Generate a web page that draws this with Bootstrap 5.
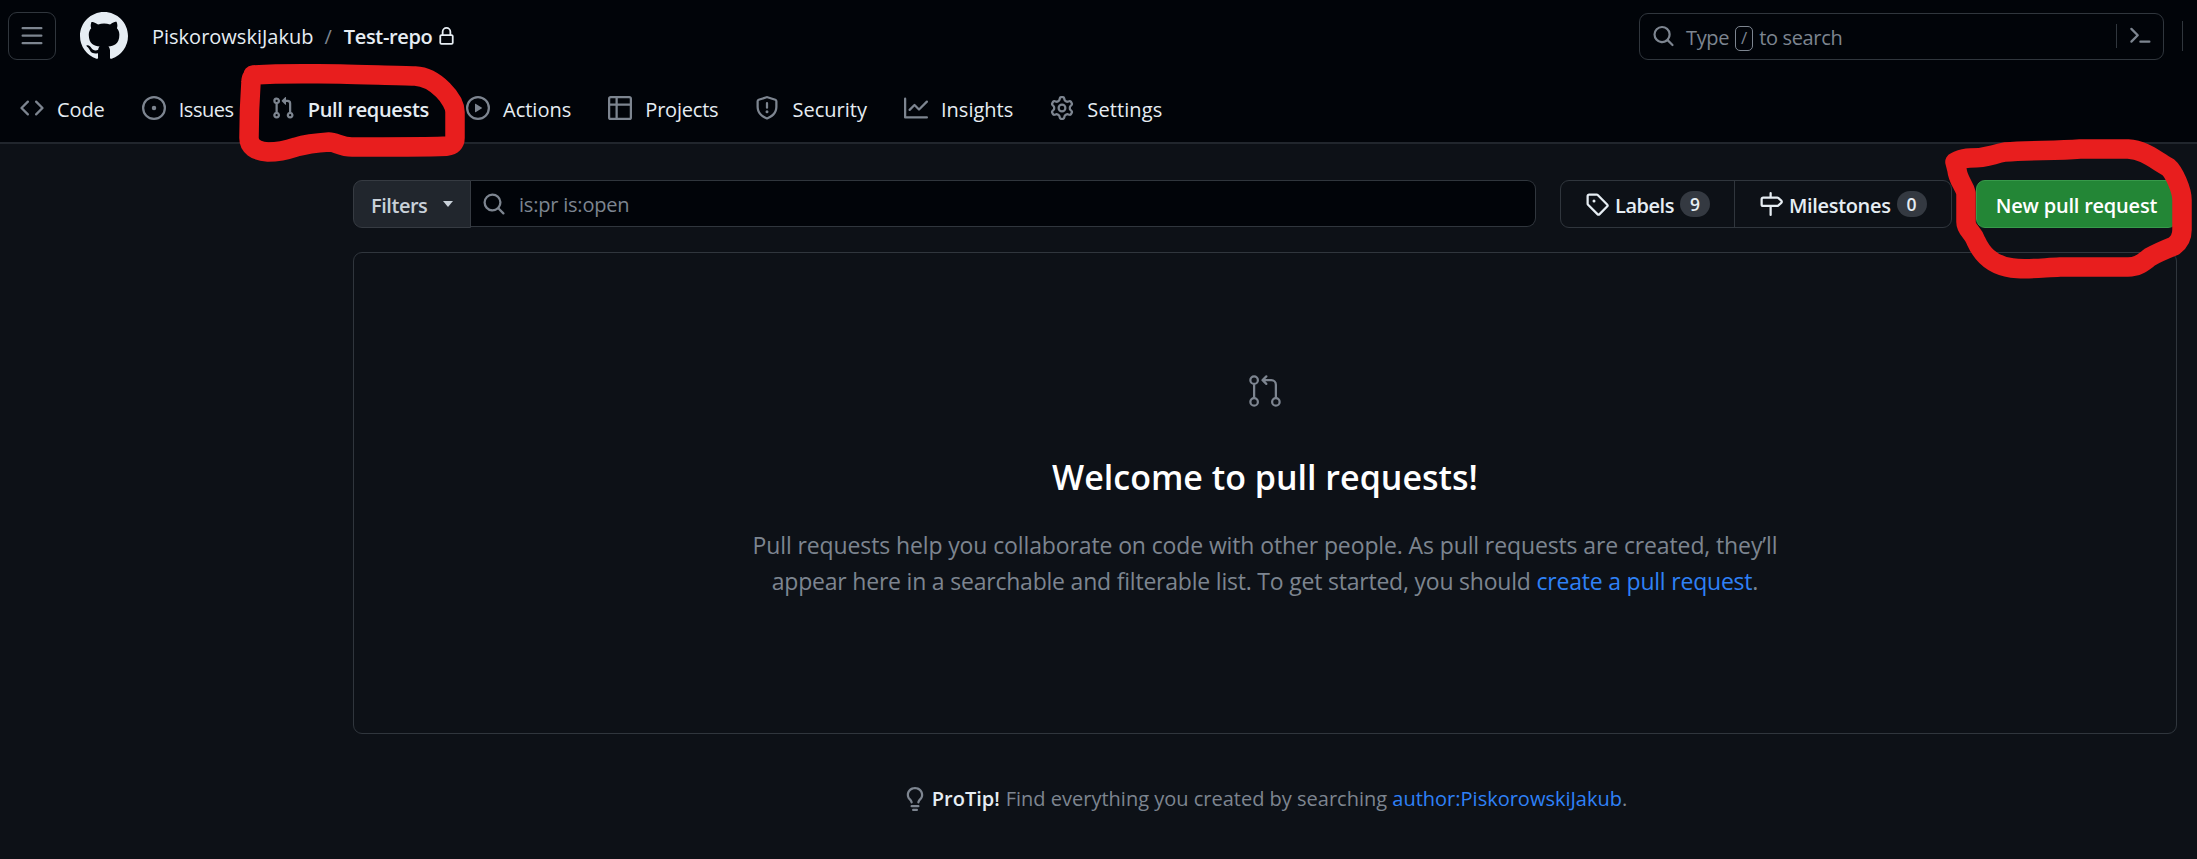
<!DOCTYPE html>
<html lang="en" data-bs-theme="dark">
<head>
<meta charset="utf-8">
<title>Pull requests</title>
<link href="https://cdn.jsdelivr.net/npm/bootstrap@5.3.0/dist/css/bootstrap.min.css" rel="stylesheet">
<script src="https://cdn.jsdelivr.net/npm/bootstrap@5.3.0/dist/js/bootstrap.bundle.min.js" defer></script>
<style>
  body { background:#0d1117; color:#e6edf3; font-family:"Open Sans","Noto Sans",sans-serif; font-size:20px; line-height:30px; overflow:hidden; height:859px; width:2197px; white-space:nowrap; }
  svg { fill:currentColor; flex:none; display:block; }
  a, a:hover { color:#2f81f7; text-decoration:none; }
  .w6 { font-weight:600; }
  .muted { color:#7d8590; }
  .txt { padding-top:3px; }
  .crumb, .tip .txt { padding-top:1px; }
  .s0 { letter-spacing:.1px; }
  .s1 { letter-spacing:-.12px; }
  .s2 { letter-spacing:-.21px; }
  .s3 { letter-spacing:-.34px; }
  .s4 { letter-spacing:-.46px; }
  .site-head { background:#010409; height:144px; border-bottom:2px solid #21262d; }
  .top-row { height:72px; padding-left:8px; padding-right:14px; }
  .menu-btn { width:48px; height:48px; border:1px solid #30363d; border-radius:9px; color:#7d8590; }
  .search-box { width:525px; height:47px; border:1px solid #30363d; border-radius:9px; color:#7d8590; padding-left:12px; padding-right:11px; }
  .slash { width:18px; height:25px; margin-top:4px; border:1px solid #7d8590; border-radius:5px; font-size:17px; line-height:22px; text-align:center; }
  .rule { width:1px; background:#30363d; }
  .tabs-row { height:72px; padding-left:20px; gap:37.1px; }
  .tab { gap:13px; color:#e6edf3; }
  .tab svg { color:#7d8590; }
  .page { padding:36px 20px 0 353px; }
  .filter-btn { width:118px; height:48px; background:#21262d; border:1px solid #363b42; border-radius:9px 0 0 9px; color:#c9d1d9; padding:0 17px; }
  .caret { border:5.5px solid transparent; border-top:6px solid #c9d1d9; border-bottom:0; }
  .query { height:47px; background:#010409; border:1px solid #30363d; border-left:0; border-radius:0 9px 9px 0; padding-left:11px; }
  .pair { width:392px; height:48px; border:1px solid #30363d; border-radius:9px; margin-left:24px; margin-right:24px; }
  .pair > div { padding-left:24px; }
  .pair > div:first-child { width:174px; border-right:1px solid #30363d; }
  .count { width:30px; height:26px; border-radius:13px; background:#343941; font-size:17.5px; line-height:26px; text-align:center; }
  .new-btn { width:201px; height:48px; background:#238636; border:1px solid #379a4a; border-radius:9px; color:#fff; }
  .blank { height:482px; margin-top:24px; border:1px solid #30363d; border-radius:9px; padding-top:120px; }
  .blank h2 { font-size:34px; font-weight:600; line-height:54px; margin:41px 0 0; }
  .blank p { font-size:23px; line-height:36px; margin:23px 0 0; }
  .tip { margin-top:49px; }
  .ink { position:absolute; left:0; top:0; pointer-events:none; fill:none; }
</style>
</head>
<body>
<header class="site-head">
  <div class="top-row d-flex align-items-center">
    <div class="menu-btn d-flex align-items-center justify-content-center"><svg width="24" height="24" viewBox="0 0 16 16"><path d="M1 2.75A.75.75 0 0 1 1.75 2h12.5a.75.75 0 0 1 0 1.5H1.750A.75.75 0 0 1 1 2.75Zm0 5A.75.75 0 0 1 1.75 7h12.500a.75.75 0 0 1 0 1.500H1.750A.75.75 0 0 1 1 7.750ZM1.750 12h12.500a.75.75 0 0 1 0 1.500H1.750a.75.75 0 0 1 0-1.500Z"/></svg></div>
    <svg class="ms-4" width="48" height="48" viewBox="0 0 16 16"><path d="M8 0c4.420 0 8 3.580 8 8a8.013 8.013 0 0 1-5.450 7.590c-.4.080-.55-.17-.55-.38 0-.27.010-1.130.010-2.200 0-.75-.25-1.230-.54-1.480 1.780-.2 3.650-.88 3.650-3.950 0-.88-.31-1.590-.82-2.150.080-.2.360-1.020-.080-2.120 0 0-.67-.22-2.200.82-.64-.18-1.320-.27-2-.27-.68 0-1.360.090-2 .27-1.530-1.030-2.200-.82-2.200-.82-.44 1.100-.16 1.920-.080 2.120-.51.560-.82 1.280-.82 2.150 0 3.060 1.860 3.750 3.640 3.950-.23.2-.44.550-.51 1.070-.46.210-1.610.550-2.330-.66-.15-.24-.6-.83-1.230-.82-.67.010-.27.380.010.530.34.190.730.900.820 1.130.160.450.680 1.310 2.690.940 0 .670.010 1.300.010 1.490 0 .210-.150.450-.550.380A7.995 7.995 0 0 1 0 8c0-4.420 3.580-8 8-8Z"/></svg>
    <span class="crumb" style="margin-left:24px">PiskorowskiJakub</span>
    <span class="crumb muted" style="margin:0 12px 0 11px">/</span>
    <span class="crumb w6 s3">Test-repo</span>
    <svg style="margin-left:5px" width="19" height="19" viewBox="0 0 16 16"><path d="M4 4a4 4 0 0 1 8 0v2h.250c.966 0 1.750.784 1.750 1.750v5.500A1.750 1.750 0 0 1 12.250 15h-8.500A1.750 1.750 0 0 1 2 13.250v-5.500C2 6.784 2.784 6 3.750 6H4Zm8.250 3.500h-8.500a.25.25 0 0 0-.250.250v5.500c0 .138.112.250.250.250h8.500a.25.25 0 0 0 .250-.250v-5.500a.25.25 0 0 0-.250-.250ZM10.500 6V4a2.500 2.500 0 1 0-5 0v2Z"/></svg>
    <div class="search-box d-flex align-items-center ms-auto">
      <svg width="23" height="24" viewBox="0 0 16 16"><path d="M10.680 11.740a6 6 0 0 1-7.922-8.982 6 6 0 0 1 8.982 7.922l3.040 3.040a.749.749 0 1 1-1.060 1.060ZM11.500 7a4.499 4.499 0 1 0-8.997 0A4.499 4.499 0 0 0 11.500 7Z"/></svg>
      <span class="txt s3" style="margin:0 6px 0 11px">Type</span><span class="slash">/</span><span class="txt s3" style="margin-left:6px">to search</span>
      <span class="rule ms-auto" style="height:24px;margin-right:11px"></span>
      <svg width="24" height="24" viewBox="0 0 16 16"><path d="M1.720 2.720a.75.75 0 0 1 1.060 0l4.250 4.250a.75.75 0 0 1 0 1.060l-4.250 4.250a.75.75 0 0 1-1.060-1.060L5.440 7.500 1.720 3.780a.75.75 0 0 1 0-1.060ZM8.250 11h6a.75.75 0 0 1 0 1.500h-6a.75.75 0 0 1 0-1.500Z"/></svg>
    </div>
    <span class="rule" style="height:30px;margin-left:18px"></span>
  </div>
  <nav class="tabs-row d-flex align-items-center">
    <span class="tab d-flex align-items-center"><svg width="24" height="24" viewBox="0 0 16 16"><path d="m11.280 3.220 4.250 4.250a.75.75 0 0 1 0 1.060l-4.250 4.250a.75.75 0 0 1-1.060-1.060L13.940 8l-3.720-3.720a.75.75 0 0 1 1.060-1.060Zm-6.560 0a.75.75 0 0 1 1.060 1.060L2.060 8l3.720 3.720a.75.75 0 0 1-1.060 1.060L.47 8.530a.75.75 0 0 1 0-1.060Z"/></svg><span class="txt s1">Code</span></span>
    <span class="tab d-flex align-items-center"><svg width="24" height="24" viewBox="0 0 16 16"><circle cx="8" cy="8" r="1.500"/><circle cx="8" cy="8" r="7.250" fill="none" stroke="currentColor" stroke-width="1.500"/></svg><span class="txt s4">Issues</span></span>
    <span class="tab d-flex align-items-center"><svg width="24" height="24" viewBox="0 0 16 16"><path d="M1.500 3.250a2.250 2.250 0 1 1 3 2.122v5.256a2.251 2.251 0 1 1-1.500 0V5.372A2.250 2.250 0 0 1 1.500 3.250Zm5.677-.177L9.573.677A.25.25 0 0 1 10 .854V2.500h1A2.500 2.500 0 0 1 13.500 5v5.628a2.251 2.251 0 1 1-1.500 0V5a1 1 0 0 0-1-1h-1v1.646a.25.25 0 0 1-.427.177L7.177 3.427a.25.25 0 0 1 0-.354ZM3.750 2.500a.75.75 0 1 0 0 1.500.75.75 0 0 0 0-1.500Zm0 9.500a.75.75 0 1 0 0 1.500.75.75 0 0 0 0-1.500Zm8.250.75a.75.75 0 1 0 1.500 0 .75.75 0 0 0-1.500 0Z"/></svg><span class="txt w6 s3">Pull requests</span></span>
    <span class="tab d-flex align-items-center"><svg width="24" height="24" viewBox="0 0 16 16"><circle cx="8" cy="8" r="7.250" fill="none" stroke="currentColor" stroke-width="1.500"/><path d="M6.379 5.227 10.640 7.785a.25.25 0 0 1 0 .430L6.379 10.773A.25.25 0 0 1 6 10.559V5.442a.25.25 0 0 1 .379-.215Z"/></svg><span class="txt">Actions</span></span>
    <span class="tab d-flex align-items-center"><svg width="24" height="24" viewBox="0 0 16 16"><path d="M0 1.750C0 .784.784 0 1.750 0h12.500C15.216 0 16 .784 16 1.750v12.500A1.750 1.750 0 0 1 14.250 16H1.750A1.750 1.750 0 0 1 0 14.250ZM6.500 6.500v8h7.750a.25.25 0 0 0 .250-.250V6.500Zm8-1.500V1.750a.25.25 0 0 0-.250-.250H6.500V5Zm-13 1.500v7.750c0 .138.112.250.250.250H5v-8ZM5 5V1.500H1.750a.25.25 0 0 0-.250.250V5Z"/></svg><span class="txt s2">Projects</span></span>
    <span class="tab d-flex align-items-center"><svg width="24" height="24" viewBox="0 0 16 16"><path d="M7.467.133a1.748 1.748 0 0 1 1.066 0l5.250 1.680A1.750 1.750 0 0 1 15 3.480V7c0 1.566-.320 3.182-1.303 4.682-.983 1.498-2.585 2.813-5.032 3.855a1.697 1.697 0 0 1-1.330 0c-2.447-1.042-4.049-2.357-5.032-3.855C1.320 10.182 1 8.566 1 7V3.480a1.755 1.755 0 0 1 1.217-1.667Zm.610 1.429a.25.25 0 0 0-.153 0l-5.250 1.680a.25.25 0 0 0-.174.238V7c0 1.358.275 2.666 1.057 3.860.784 1.194 2.121 2.340 4.366 3.297a.196.196 0 0 0 .154 0c2.245-.956 3.582-2.104 4.366-3.298C13.225 9.666 13.500 8.360 13.500 7V3.480a.251.251 0 0 0-.174-.237l-5.250-1.680ZM8.750 4.750v3a.75.75 0 0 1-1.500 0v-3a.75.75 0 0 1 1.500 0ZM9 10.500a1 1 0 1 1-2 0 1 1 0 0 1 2 0Z"/></svg><span class="txt">Security</span></span>
    <span class="tab d-flex align-items-center"><svg width="24" height="24" viewBox="0 0 16 16"><path d="M1.500 1.750V13.500h13.750a.75.75 0 0 1 0 1.500H.750a.75.75 0 0 1-.750-.750V1.750a.75.75 0 0 1 1.500 0Zm14.280 2.530-5.250 5.250a.75.75 0 0 1-1.060 0L7 7.060 4.280 9.780a.75.75 0 0 1-1.060-1.060l3.250-3.250a.75.75 0 0 1 1.060 0L10 7.940l4.720-4.720a.75.75 0 0 1 1.060 1.060Z"/></svg><span class="txt">Insights</span></span>
    <span class="tab d-flex align-items-center"><svg width="24" height="24" viewBox="0 0 16 16"><path d="M8 0a8.200 8.200 0 0 1 .701.031C9.444.095 9.990.645 10.160 1.290l.288 1.107c.018.066.079.158.212.224.231.114.454.243.668.386.123.082.233.090.299.071l1.103-.303c.644-.176 1.392.021 1.820.630.270.385.506.792.704 1.218.315.675.111 1.422-.364 1.891l-.814.806c-.049.048-.098.147-.088.294.016.257.016.515 0 .772-.010.147.038.246.088.294l.814.806c.475.469.679 1.216.364 1.891a7.977 7.977 0 0 1-.704 1.217c-.428.610-1.176.807-1.820.630l-1.102-.302c-.067-.019-.177-.011-.300.071a5.909 5.909 0 0 1-.668.386c-.133.066-.194.158-.211.224l-.290 1.106c-.168.646-.715 1.196-1.458 1.260a8.006 8.006 0 0 1-1.402 0c-.743-.064-1.289-.614-1.458-1.260l-.289-1.106c-.018-.066-.079-.158-.212-.224a5.738 5.738 0 0 1-.668-.386c-.123-.082-.233-.090-.299-.071l-1.103.303c-.644.176-1.392-.021-1.820-.630a8.120 8.120 0 0 1-.704-1.218c-.315-.675-.111-1.422.363-1.891l.815-.806c.050-.048.098-.147.088-.294a6.214 6.214 0 0 1 0-.772c.010-.147-.038-.246-.088-.294l-.815-.806C.635 6.045.431 5.298.746 4.623a7.920 7.920 0 0 1 .704-1.217c.428-.610 1.176-.807 1.820-.630l1.102.302c.067.019.177.011.300-.071.214-.143.437-.272.668-.386.133-.066.194-.158.211-.224l.290-1.106C6.009.645 6.556.095 7.299.030 7.530.010 7.764 0 8 0Zm-.571 1.525c-.036.003-.108.036-.137.146l-.289 1.105c-.147.561-.549.967-.998 1.189-.173.086-.340.183-.500.290-.417.278-.970.423-1.529.270l-1.103-.303c-.109-.030-.175.016-.195.045-.220.312-.412.644-.573.990-.014.031-.021.110.059.190l.815.806c.411.406.562.957.530 1.456a4.709 4.709 0 0 0 0 .582c.032.499-.119 1.050-.530 1.456l-.815.806c-.081.080-.073.159-.059.190.162.346.353.677.573.989.020.030.085.076.195.046l1.102-.303c.560-.153 1.113-.008 1.530.270.161.107.328.204.501.290.447.222.850.629.997 1.189l.289 1.105c.029.109.101.143.137.146a6.600 6.600 0 0 0 1.142 0c.036-.003.108-.036.137-.146l.289-1.105c.147-.561.549-.967.998-1.189.173-.086.340-.183.500-.290.417-.278.970-.423 1.529-.270l1.103.303c.109.029.175-.016.195-.045.220-.313.411-.644.573-.990.014-.031.021-.110-.059-.190l-.815-.806c-.411-.406-.562-.957-.530-1.456a4.709 4.709 0 0 0 0-.582c-.032-.499.119-1.050.530-1.456l.815-.806c.081-.080.073-.159.059-.190a6.464 6.464 0 0 0-.573-.989c-.020-.030-.085-.076-.195-.046l-1.102.303c-.560.153-1.113.008-1.530-.270a4.440 4.440 0 0 0-.501-.290c-.447-.222-.850-.629-.997-1.189l-.289-1.105c-.029-.110-.101-.143-.137-.146a6.600 6.600 0 0 0-1.142 0ZM11 8a3 3 0 1 1-6 0 3 3 0 0 1 6 0ZM9.500 8a1.500 1.500 0 1 0-3.001.001A1.500 1.500 0 0 0 9.500 8Z"/></svg><span class="txt s0">Settings</span></span>
  </nav>
</header>
<main class="page">
  <div class="d-flex">
    <div class="filter-btn w6 d-flex align-items-center justify-content-between"><span class="txt s4">Filters</span><i class="caret"></i></div>
    <div class="query d-flex flex-grow-1 align-items-center muted"><svg width="24" height="24" viewBox="0 0 16 16"><path d="M10.680 11.740a6 6 0 0 1-7.922-8.982 6 6 0 0 1 8.982 7.922l3.040 3.040a.749.749 0 1 1-1.060 1.060ZM11.500 7a4.499 4.499 0 1 0-8.997 0A4.499 4.499 0 0 0 11.500 7Z"/></svg><span class="txt s2" style="margin-left:13px">is:pr is:open</span></div>
    <div class="pair d-flex w6">
      <div class="d-flex align-items-center"><svg width="24" height="24" viewBox="0 0 16 16"><path d="M1 7.775V2.750C1 1.784 1.784 1 2.750 1h5.025c.464 0 .910.184 1.238.513l6.250 6.250a1.750 1.750 0 0 1 0 2.474l-5.026 5.026a1.750 1.750 0 0 1-2.474 0l-6.250-6.250A1.752 1.752 0 0 1 1 7.775Zm1.500 0c0 .066.026.130.073.177l6.250 6.250a.25.25 0 0 0 .354 0l5.025-5.025a.25.25 0 0 0 0-.354l-6.250-6.250a.25.25 0 0 0-.177-.073H2.750a.25.25 0 0 0-.250.250ZM6 5a1 1 0 1 1 0 2 1 1 0 0 1 0-2Z"/></svg><span class="txt s4" style="margin:0 6px">Labels</span><span class="count">9</span></div>
      <div class="d-flex align-items-center"><svg width="24" height="24" viewBox="0 0 16 16"><path d="M7.750 0a.75.75 0 0 1 .750.750V3h3.634c.414 0 .814.147 1.130.414l2.070 1.750a1.750 1.750 0 0 1 0 2.672l-2.070 1.750a1.750 1.750 0 0 1-1.130.414H8.500v5.250a.75.75 0 0 1-1.500 0V10H2.750A1.750 1.750 0 0 1 1 8.250v-3.500C1 3.784 1.784 3 2.750 3H7V.750A.75.75 0 0 1 7.750 0Zm4.384 8.500a.25.25 0 0 0 .161-.060l2.070-1.750a.248.248 0 0 0 0-.380l-2.070-1.750a.25.25 0 0 0-.161-.060H2.750a.25.25 0 0 0-.250.250v3.500c0 .138.112.250.250.250h9.384Z"/></svg><span class="txt s3" style="margin:0 6px">Milestones</span><span class="count">0</span></div>
    </div>
    <div class="new-btn w6 d-flex align-items-center justify-content-center"><span class="txt s2">New pull request</span></div>
  </div>
  <section class="blank d-flex flex-column align-items-center text-center">
    <svg class="muted" width="36" height="36" viewBox="0 0 24 24"><path d="M16 19.250a3.250 3.250 0 1 1 6.500 0 3.250 3.250 0 0 1-6.500 0Zm-14.500 0a3.250 3.250 0 1 1 6.500 0 3.250 3.250 0 0 1-6.500 0Zm0-14.500a3.250 3.250 0 1 1 6.500 0 3.250 3.250 0 0 1-6.500 0ZM4.750 3a1.750 1.750 0 1 0 .001 3.501A1.750 1.750 0 0 0 4.750 3Zm0 14.500a1.750 1.750 0 1 0 .001 3.501A1.750 1.750 0 0 0 4.750 17.500Zm14.500 0a1.750 1.750 0 1 0 .001 3.501 1.750 1.750 0 0 0-.001-3.501Z"/><path d="M13.405 1.720a.75.75 0 0 1 0 1.060L12.185 4h4.065A3.750 3.750 0 0 1 20 7.750v8.750a.75.75 0 0 1-1.500 0V7.750a2.250 2.250 0 0 0-2.250-2.250h-4.064l1.220 1.220a.75.75 0 0 1-1.061 1.060l-2.500-2.500a.75.75 0 0 1 0-1.060l2.500-2.500a.75.75 0 0 1 1.060 0ZM4.750 7.250A.75.75 0 0 1 5.500 8v8A.75.75 0 0 1 4 16V8a.75.75 0 0 1 .750-.750Z"/></svg>
    <h2>Welcome to pull requests!</h2>
    <p class="muted"><span class="s1">Pull requests help you collaborate on code with other people. As pull requests are created, they’ll</span><br><span class="s2">appear here in a searchable and filterable list. To get started, you should <a href="#">create a pull request</a>.</span></p>
  </section>
  <div class="tip d-flex justify-content-center align-items-center muted"><svg width="24" height="24" viewBox="0 0 16 16"><path d="M8 1.500c-2.363 0-4 1.690-4 3.750 0 .984.424 1.625.984 2.304l.214.253c.223.264.470.556.673.848.284.411.537.896.621 1.490a.75.75 0 0 1-1.484.211c-.040-.282-.163-.547-.370-.847a8.456 8.456 0 0 0-.542-.680c-.084-.100-.173-.205-.268-.320C3.201 7.750 2.500 6.766 2.500 5.250 2.500 2.310 4.863 0 8 0s5.500 2.310 5.500 5.250c0 1.516-.701 2.500-1.328 3.259-.095.115-.184.220-.268.319-.207.245-.383.453-.541.681-.208.300-.330.565-.370.847a.751.751 0 0 1-1.485-.212c.084-.593.337-1.078.621-1.489.203-.292.450-.584.673-.848.075-.088.147-.173.213-.253.561-.679.985-1.320.985-2.304 0-2.060-1.637-3.750-4-3.750ZM5.750 12h4.500a.75.75 0 0 1 0 1.500h-4.500a.75.75 0 0 1 0-1.500ZM6 15.250a.75.75 0 0 1 .750-.750h2.500a.75.75 0 0 1 0 1.500h-2.500a.75.75 0 0 1-.750-.750Z"/></svg><span class="txt w6" style="color:#e6edf3;margin:0 6px 0 5px">ProTip!</span><span class="txt">Find everything you created by searching <a href="#">author:PiskorowskiJakub</a>.</span></div>
</main>
<svg class="ink" width="2197" height="300" viewBox="0 0 2197 300" stroke="#e81e1e" stroke-width="19.500" stroke-linecap="round" stroke-linejoin="round">
  <path d="M253 75C285 73 310 74 340 74C370 75 400 75 415 76C436 77 455 100 455 112V138Q455 145 447 146C440 147 400 147 352 147C341 147 336 142 329 142C315 143 303 145 296 147C284 151 278 152 268 152C255 151 249 146 249 138Q249 110 251 82Q251 76 256 75"/>
  <path d="M1955 162C1960 160 1962 158 1970 158C1988 158 1990 155 2005 152C2030 150 2055 151 2080 149H2128C2145 150 2155 160 2168 167C2174 172 2182 190 2182 200V230Q2182 240 2174 246C2164 250 2157 253 2150 257C2142 263 2138 267 2128 267H2060C2040 268 2025 270 2012 268C1990 265 1981 252 1976 241C1973 232 1966 230 1966 222V193C1964 185 1958 180 1957 170Z"/>
</svg>
</body>
</html>
